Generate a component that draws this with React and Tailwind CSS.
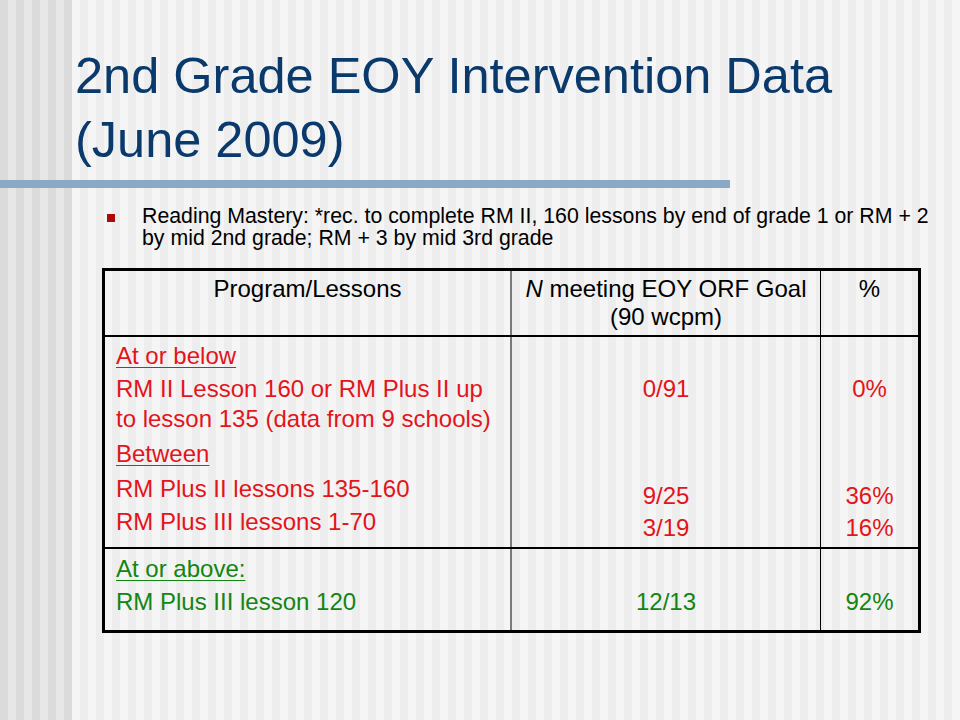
export default function App() {
  const red = "text-[#e3141b]";
  const green = "text-[#128512]";
  return (
    <div
      className="w-[960px] h-[720px] overflow-hidden flex flex-col [font-family:'Liberation_Sans',Arial,sans-serif] [background:repeating-linear-gradient(90deg,#dbdbdb_0px,#dbdbdb_8px,#e7e7e7_8px,#e7e7e7_16px)_0_0/72px_100%_no-repeat,repeating-linear-gradient(90deg,#ededed_0px,#ededed_8px,#f5f5f5_8px,#f5f5f5_16px)]"
    >
      <h1 className="pt-[44px] pl-[75px] text-[50.5px] leading-[64px] text-[#0a3a6c] font-normal">
        2nd Grade EOY Intervention Data
        <br />
        (June 2009)
      </h1>
      <div className="mt-[8px] h-[8px] w-[730px] bg-[#8ba9c6]" />
      <div className="mt-[17px] flex pl-[107px]">
        <div className="mt-[9px] w-[8px] h-[8px] bg-[#a80c0c] shrink-0" />
        <div className="ml-[27px] text-[21.3px] leading-[22px] text-black whitespace-nowrap">
          Reading Mastery: *rec. to complete RM II, 160 lessons by end of grade 1 or RM + 2
          <br />
          by mid 2nd grade; RM + 3 by mid 3rd grade
        </div>
      </div>
      <div className="mt-[19px] ml-[102px] w-[819px] border-[3px] border-black text-[24px] whitespace-nowrap">
        {/* header */}
        <div className="grid grid-cols-[407px_309px_1fr] border-b-2 border-black h-[66px]">
          <div className="border-r-2 border-[#7a7a7a] pt-[4px] text-center leading-[28px]">
            Program/Lessons
          </div>
          <div className="border-r border-black pt-[4px] text-center leading-[28px]">
            <i>N</i> meeting EOY ORF Goal
            <br />
            (90 wcpm)
          </div>
          <div className="pt-[4px] text-center leading-[28px]">%</div>
        </div>
        {/* row 1 */}
        <div className={`grid grid-cols-[407px_309px_1fr] border-b-2 border-black h-[212px] leading-[30px] ${red}`}>
          <div className="border-r-2 border-[#7a7a7a] pl-[11px] pt-[4px]">
            <div className="underline underline-offset-[3px] decoration-1">At or below</div>
            <div className="mt-[3px]">RM II Lesson 160 or RM Plus II up</div>
            <div>to lesson 135 (data from 9 schools)</div>
            <div className="mt-[5px] underline underline-offset-[3px] decoration-1">Between</div>
            <div className="mt-[5px]">RM Plus II lessons 135-160</div>
            <div className="mt-[3px]">RM Plus III lessons 1-70</div>
          </div>
          <div className="border-r border-black text-center pt-[37px]">
            <div>0/91</div>
            <div className="mt-[77px]">9/25</div>
            <div className="mt-[2px]">3/19</div>
          </div>
          <div className="text-center pt-[37px]">
            <div>0%</div>
            <div className="mt-[77px]">36%</div>
            <div className="mt-[2px]">16%</div>
          </div>
        </div>
        {/* row 2 */}
        <div className={`grid grid-cols-[407px_309px_1fr] h-[81px] leading-[30px] ${green}`}>
          <div className="border-r-2 border-[#7a7a7a] pl-[11px] pt-[5px]">
            <div className="underline underline-offset-[3px] decoration-1">At or above:</div>
            <div className="mt-[3px]">RM Plus III lesson 120</div>
          </div>
          <div className="border-r border-black text-center pt-[38px]">12/13</div>
          <div className="text-center pt-[38px]">92%</div>
        </div>
      </div>
    </div>
  );
}
